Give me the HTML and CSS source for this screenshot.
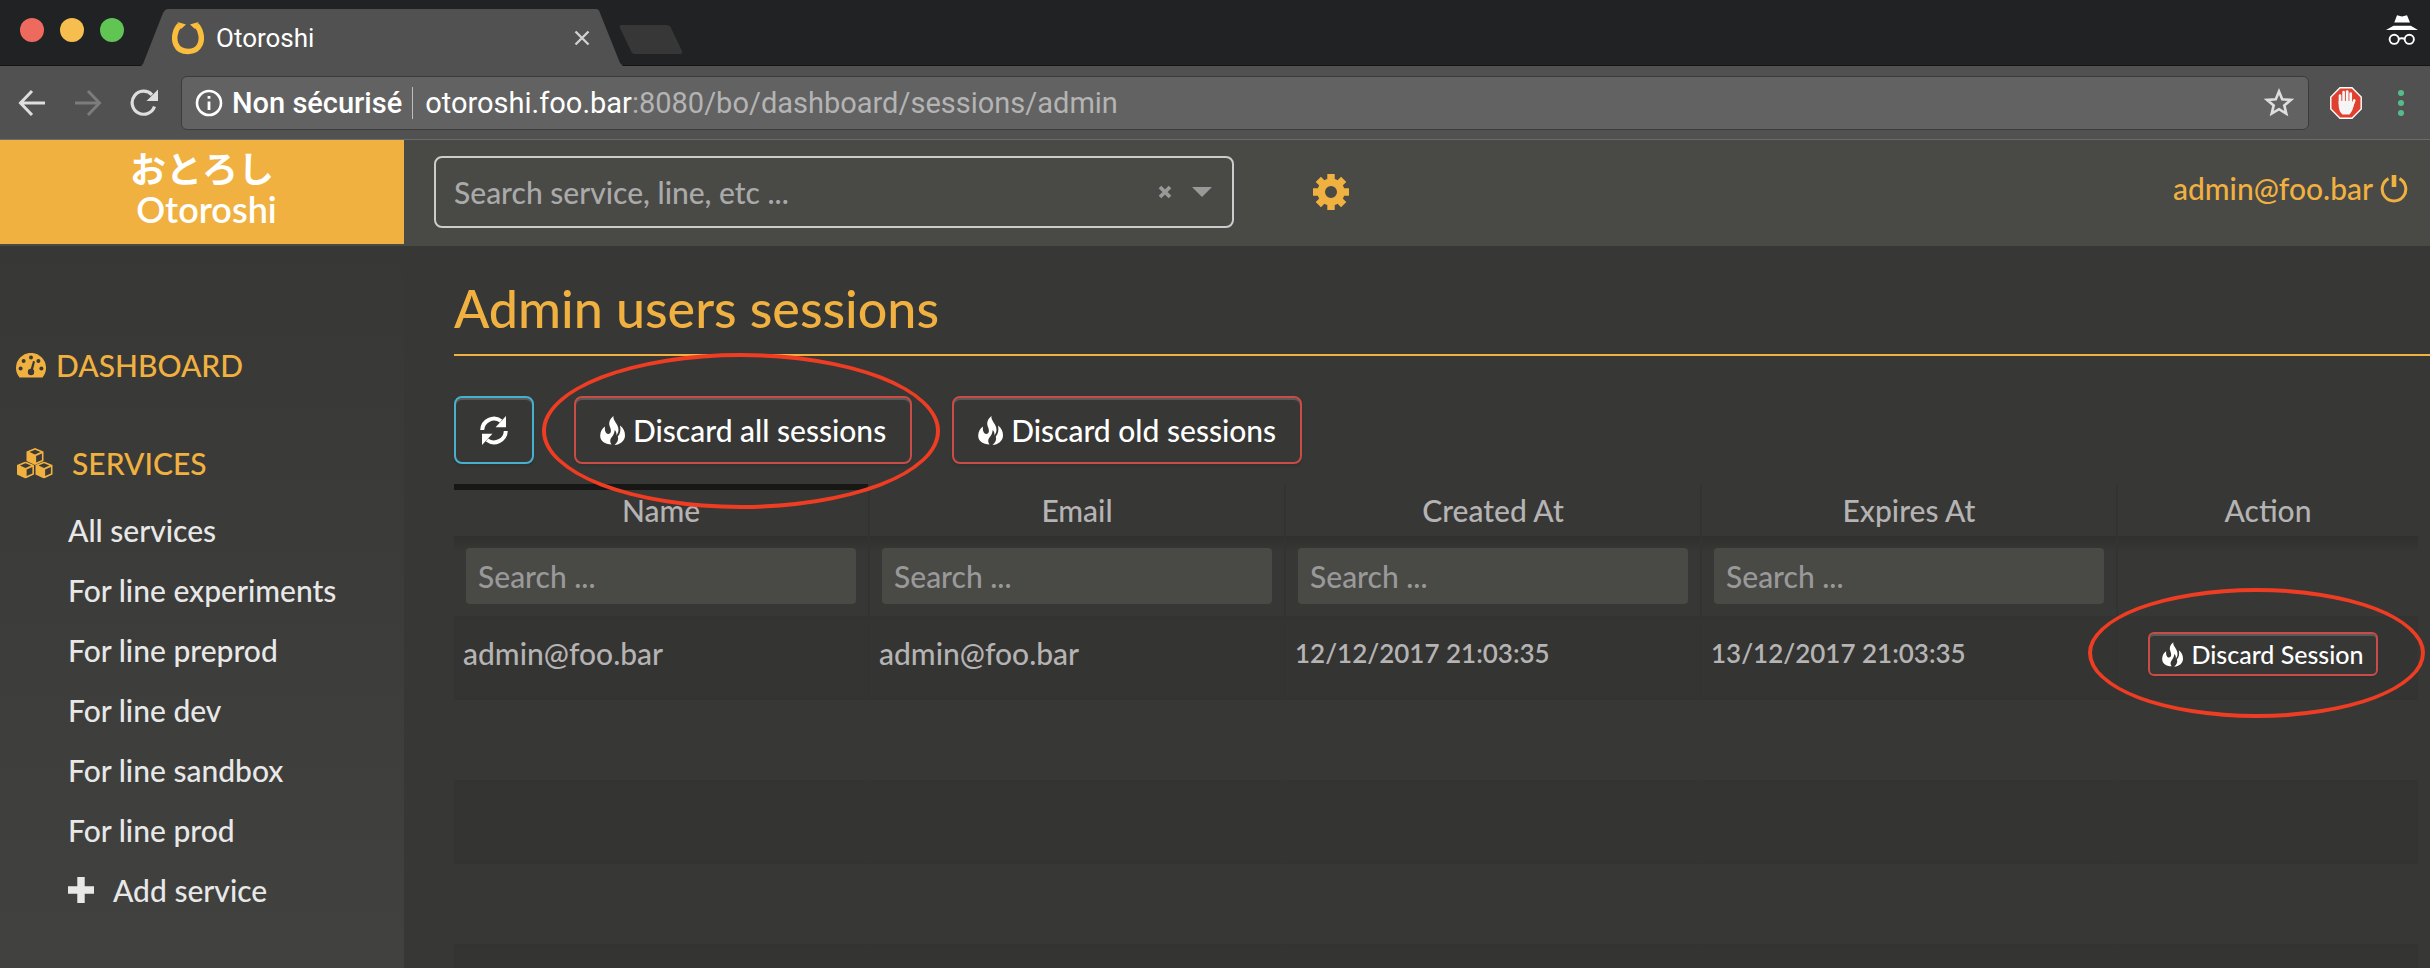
FILE: index.html
```html
<!DOCTYPE html>
<html lang="en">
<head>
<meta charset="utf-8">
<title>Otoroshi</title>
<link rel="stylesheet" href="styles.css">
</head>
<body>
<svg class="defs" aria-hidden="true">
  <symbol id="flame" viewBox="0 0 25 29">
    <path d="M13.500 0C12.500 4.500 18.500 8 18.500 13.500C18.500 16.500 17.300 18 16.500 19.500C16.700 17 16 15 14.700 14C14.500 17 13.500 19 11.500 21.500C9.800 23.500 9.800 26 11.500 28.500C5 28.500 0 25 .2 19.500C.3 15 2.500 12 5 10.500C4.500 14 5.500 18 8.300 18C11.500 18 11.300 14 10 11C8.300 7 9.500 3 13.500 0Z"/>
    <path d="M20 9.500C23.500 12 25 15.500 25 19.500C25 25 20 28.800 14.500 29C17.500 26.500 18.800 23.500 17.800 20.500C20.300 17.500 21 14 20 9.500Z"/>
  </symbol>
  <symbol id="cube" viewBox="-9 -9 18 18">
    <path fill-rule="evenodd" d="M0-9L9-5.200V4.800L0 9L-9 4.800V-5.200ZM0-7.100L-5.800-4.700L0-2.200L5.800-4.700ZM1.200-.6V6.300L7.300 3.600V-3.300Z"/>
  </symbol>
</svg>

<header class="browser">
  <div class="tabstrip">
    <div class="lights"><i class="light red"></i><i class="light yellow"></i><i class="light green"></i></div>
    <div class="tab">
      <svg class="tab-shape" viewBox="0 0 482 57" preserveAspectRatio="none" aria-hidden="true"><path d="M0 57L2 55L22 4Q24 0 27 0H455Q458 0 459 4L479 54L482 57Z" fill="#515151"/></svg>
      <svg class="favicon" viewBox="0 0 32 34" aria-hidden="true"><path d="M7.500 4C2.500 10 1.500 18 4 23.500C6.200 28.500 10.500 30.500 16 30.500C21.500 30.500 25.800 28.500 28 23.500C30.500 18 29.500 10 24.500 4" fill="none" stroke="#fbbd3e" stroke-width="5.500"/><path d="M5.500 1L14 3.500L9 8ZM26.500 1L18 3.500L23 8Z" fill="#fbbd3e"/></svg>
      <span class="tab-title">Otoroshi</span>
      <button class="tab-close" aria-label="Close tab"><svg viewBox="0 0 16 16"><path d="M1.500 1.500L14.500 14.500M14.500 1.500L1.500 14.500" stroke="#d0d0d0" stroke-width="2.400"/></svg></button>
    </div>
    <button class="newtab" aria-label="New tab"><svg viewBox="0 0 64 30"><path d="M3 0H47Q51 0 52 3L63 26Q64 29 61 29H16Q13 29 12 26L1 3Q0 0 3 0Z" fill="#373737"/></svg></button>
    <svg class="incognito" viewBox="0 0 32 30" aria-label="Incognito"><path d="M11 .2L16 1.500L21 .2L24 7.400H8.300ZM7.500 10.800H24.800L32 15H0Z" fill="#fff"/><g fill="none" stroke="#fff" stroke-width="1.900"><circle cx="8.200" cy="24.300" r="4.600"/><circle cx="23.300" cy="24.300" r="4.600"/><path d="M12.500 24Q15.700 22.500 19 24"/></g></svg>
  </div>
  <div class="toolbar">
    <div class="nav">
      <button aria-label="Back"><svg viewBox="0 0 28 28"><path d="M27 14H3M14 2L2.500 14L14 26" fill="none" stroke="#dedede" stroke-width="3"/></svg></button>
      <button aria-label="Forward"><svg viewBox="0 0 28 28"><path d="M1 14H25M14 2L25.500 14L14 26" fill="none" stroke="#7c7c7c" stroke-width="3"/></svg></button>
      <button aria-label="Reload"><svg viewBox="0 0 28 28"><path d="M24.500 17.500A11.500 11.500 0 1 1 22 5.800" fill="none" stroke="#dedede" stroke-width="3.200"/><path d="M28 .5V12H16.500Z" fill="#dedede"/></svg></button>
    </div>
    <div class="address">
      <svg class="info" viewBox="0 0 28 28" aria-hidden="true"><circle cx="14" cy="14" r="12" fill="none" stroke="#fff" stroke-width="2.600"/><path d="M14 7V9.800M14 12.400V21" stroke="#fff" stroke-width="2.800"/></svg>
      <span class="security">Non sécurisé</span>
      <span class="divider"></span>
      <span class="url">otoroshi.foo.bar<span class="path">:8080/bo/dashboard/sessions/admin</span></span>
      <button class="star" aria-label="Bookmark"><svg viewBox="0 0 30 29"><path d="M15 3.500L18.200 11.300L26.800 11.900L20.300 17.400L22.300 25.600L15 21.200L7.700 25.600L9.700 17.400L3.200 11.900L11.800 11.300Z" fill="none" stroke="#dedede" stroke-width="2.600"/></svg></button>
    </div>
    <svg class="blocker" viewBox="0 0 32 32" aria-label="Ad blocker"><path d="M10 .8H22L31.200 10V22L22 31.200H10L.8 22V10Z" fill="#e0402f" stroke="#fff" stroke-width="1.400"/><path d="M10 17V8.500M13.600 15V5M17.200 15V4.500M20.700 16V6.500M24.300 13.500L21.500 20" stroke="#f5f5f5" stroke-width="2.700" stroke-linecap="round"/><path d="M8.700 14H22.100V19L24.500 15Q23 24 19.500 27.500H12.500Q8.700 24 8.700 19Z" fill="#f5f5f5"/></svg>
    <button class="menu" aria-label="Menu"><svg viewBox="0 0 6 28"><g fill="#55bd8b"><circle cx="3" cy="4" r="3"/><circle cx="3" cy="14" r="3"/><circle cx="3" cy="24" r="3"/></g></svg></button>
  </div>
</header>

<header class="topbar">
  <a class="brand" href="#"><span lang="ja">おとろし</span><span>&nbsp;Otoroshi</span></a>
  <div class="search">
    <input type="text" aria-label="Search service" placeholder="Search service, line, etc ...">
    <button aria-label="Clear"><svg class="clear" viewBox="0 0 14 14"><path d="M2 2L12 12M12 2L2 12" stroke="#999" stroke-width="3.800"/></svg></button>
    <button aria-label="Open"><svg class="caret" viewBox="0 0 20 10"><path d="M0 0H20L10 10Z" fill="#999"/></svg></button>
  </div>
  <a class="settings" href="#" aria-label="Settings"><svg viewBox="-18 -18 36 36"><g stroke="#f0b140" fill="none"><circle r="9.800" stroke-width="7.600"/><path d="M0-18V-12M0 12V18M-18 0H-12M12 0H18M-12.700-12.700L-8.500-8.500M12.700 12.700L8.500 8.500M12.700-12.700L8.500-8.500M-12.700 12.700L-8.500 8.500" stroke-width="7.400"/></g></svg></a>
  <a class="user" href="#">admin@foo.bar <svg viewBox="0 0 28 29" aria-label="Log out"><path d="M8.500 4.700A11.800 11.800 0 1 0 19.500 4.700" fill="none" stroke="#f0b140" stroke-width="3"/><path d="M14 1V13" stroke="#f0b140" stroke-width="4.600"/></svg></a>
</header>

<div class="app">
  <nav class="sidebar">
    <a class="section" href="#"><svg class="gauge" viewBox="0 0 30 25" aria-hidden="true"><path d="M3.500 24.500A15 15 0 1 1 26.500 24.500Z" fill="#f0b140"/><g fill="#393937"><circle cx="4.600" cy="15.500" r="2"/><circle cx="7.600" cy="8" r="2"/><circle cx="15" cy="4.600" r="2"/><circle cx="22.400" cy="8" r="2"/><circle cx="25.400" cy="15.500" r="2"/><circle cx="15" cy="19" r="3.200"/><path d="M17 8L19 8.500L16.500 19H13.800Z"/></g></svg>DASHBOARD</a>
    <a class="section services" href="#"><svg class="cubes" viewBox="0 0 38 31" aria-hidden="true"><g fill="#f0b140"><use href="#cube" x="9.500" y="0" width="19" height="17"/><use href="#cube" x="0" y="13.500" width="19" height="17"/><use href="#cube" x="18.500" y="13.500" width="19" height="17"/></g></svg>SERVICES</a>
    <ul>
      <li><a href="#">All services</a></li>
      <li><a href="#">For line experiments</a></li>
      <li><a href="#">For line preprod</a></li>
      <li><a href="#">For line dev</a></li>
      <li><a href="#">For line sandbox</a></li>
      <li><a href="#">For line prod</a></li>
      <li><a href="#"><svg class="plus" viewBox="0 0 26 26" aria-hidden="true"><path d="M13 0V26M0 13H26" stroke="#e8e8e8" stroke-width="7.400"/></svg>Add service</a></li>
    </ul>
  </nav>

  <main>
    <h1>Admin users sessions</h1>
    <div class="actions">
      <button class="btn info-btn" aria-label="Refresh"><svg class="refresh" viewBox="0 0 28 29"><g id="half"><path d="M2.200 14A11.800 11.800 0 0 1 21 5" fill="none" stroke="#fff" stroke-width="4"/><path d="M26 0V11.300H15.500Z" fill="#fff"/></g><use href="#half" transform="rotate(180 14 14.500)"/></svg></button>
      <span class="marked">
        <button class="btn danger"><svg class="flame"><use href="#flame"/></svg>Discard all sessions</button>
        <i class="ring ring-large"></i>
      </span>
      <button class="btn danger"><svg class="flame"><use href="#flame"/></svg>Discard old sessions</button>
    </div>
    <table>
      <colgroup><col><col><col><col><col class="col-action"></colgroup>
      <thead>
        <tr class="heads"><th class="sorted">Name</th><th>Email</th><th>Created At</th><th>Expires At</th><th>Action</th></tr>
        <tr class="filters">
          <td><input type="text" aria-label="Filter name" placeholder="Search ..."></td>
          <td><input type="text" aria-label="Filter email" placeholder="Search ..."></td>
          <td><input type="text" aria-label="Filter created at" placeholder="Search ..."></td>
          <td><input type="text" aria-label="Filter expires at" placeholder="Search ..."></td>
          <td></td>
        </tr>
      </thead>
      <tbody>
        <tr>
          <td>admin@foo.bar</td><td>admin@foo.bar</td><td class="date">12/12/2017 21:03:35</td><td class="date">13/12/2017 21:03:35</td>
          <td class="action"><span class="marked"><button class="btn danger small"><svg class="flame"><use href="#flame"/></svg>Discard Session</button><i class="ring ring-small"></i></span></td>
        </tr>
        <tr><td></td><td></td><td></td><td></td><td></td></tr>
        <tr><td></td><td></td><td></td><td></td><td></td></tr>
        <tr><td></td><td></td><td></td><td></td><td></td></tr>
        <tr><td></td><td></td><td></td><td></td><td></td></tr>
      </tbody>
    </table>
  </main>
</div>
</body>
</html>
```
FILE: styles.css
```css
* { box-sizing: border-box; }

body {
  margin: 0;
  height: 100vh;
  display: flex;
  flex-direction: column;
  overflow: hidden;
  background: #373735;
  color: #b5b3b3;
  font-family: Lato, "Noto Sans CJK JP", sans-serif;
  font-size: 30px;
  font-weight: 500;
}

svg { display: block; flex: none; }
a { color: inherit; text-decoration: none; }
button {
  margin: 0;
  padding: 0;
  border: 0;
  background: none;
  color: inherit;
  font: inherit;
  flex: none;
}
input { font: inherit; color: inherit; }
.defs { position: absolute; width: 0; height: 0; }

/* Browser frame */
.browser { flex: none; font-family: Roboto, sans-serif; font-weight: 400; }
.tabstrip {
  height: 66px;
  display: flex;
  align-items: flex-end;
  background: #202224;
  box-shadow: inset 0 -1px #141516;
}
.lights { display: flex; gap: 16px; width: 141px; padding: 0 0 24px 20px; }
.light { width: 24px; height: 24px; border-radius: 50%; }
.red { background: #ee6a5f; }
.yellow { background: #f5be4f; }
.green { background: #61c554; }
.tab {
  position: relative;
  width: 482px;
  height: 57px;
  padding: 0 33px 0 31px;
  display: flex;
  align-items: center;
  color: #fff;
  font-size: 26px;
}
.tab-shape { position: absolute; inset: 0; width: 100%; height: 100%; }
.favicon { position: relative; width: 32px; height: 34px; }
.tab-title { position: relative; flex: 1; padding-left: 12px; }
.tab-close { position: relative; }
.tab-close svg { width: 16px; height: 16px; }
.newtab { margin-left: -4px; padding-bottom: 11px; }
.newtab svg { width: 64px; height: 30px; }
.incognito { width: 32px; height: 30px; margin: 0 12px 21px auto; }

.toolbar {
  height: 74px;
  display: flex;
  align-items: center;
  padding: 0 26px 0 18px;
  background: #515151;
  border-bottom: 1px solid #6b6b69;
}
.nav { display: flex; gap: 28px; width: 163px; }
.nav svg { width: 28px; height: 28px; }
.address {
  flex: 1;
  height: 54px;
  display: flex;
  align-items: center;
  padding: 0 14px 0 13px;
  border: 1px solid #3b3b3b;
  border-radius: 6px;
  background: #626262;
  color: #fff;
  font-size: 29px;
}
.info { width: 28px; height: 28px; }
.security { padding-left: 9px; font-weight: 500; }
.divider { width: 1px; height: 32px; margin: 0 12px 0 10px; background: #bdbdbd; }
.url { flex: 1; }
.path { color: #b4b4b4; }
.star svg { width: 30px; height: 29px; }
.blocker { width: 32px; height: 32px; margin: 0 36px 0 21px; }
.menu svg { width: 6px; height: 28px; }

/* Application bar */
.topbar {
  flex: none;
  height: 106px;
  display: flex;
  align-items: center;
  padding-bottom: 2px;
  background: #494946;
  color: #f0b140;
}
.brand {
  flex: none;
  width: 404px;
  height: 104px;
  padding-bottom: 6px;
  display: flex;
  flex-direction: column;
  align-items: center;
  justify-content: center;
  background: #f0b140;
  color: #fff;
  font-size: 36px;
  font-weight: 600;
  line-height: 40px;
}
.search {
  flex: 0 1 800px;
  height: 72px;
  margin-left: 30px;
  padding: 0 20px 0 18px;
  display: flex;
  align-items: center;
  gap: 20px;
  border: 2px solid #ccc;
  border-radius: 8px;
}
.search input {
  flex: 1;
  min-width: 0;
  padding: 0;
  border: 0;
  background: none;
}
.search input::placeholder { color: #aaa; opacity: 1; }
.clear { width: 14px; height: 14px; }
.caret { width: 20px; height: 10px; }
.settings { margin-left: 79px; }
.settings svg { width: 36px; height: 36px; }
.user {
  margin-left: auto;
  padding: 0 22px 8px 0;
  display: flex;
  align-items: center;
  gap: 7px;
}
.user svg { width: 28px; height: 29px; }

.app {
  flex: 1;
  min-height: 0;
  display: grid;
  grid-template-columns: 404px 1fr;
}

/* Sidebar */
.sidebar {
  padding: 89px 0 0 16px;
  background: linear-gradient(#373735, #41413f);
  line-height: 60px;
}
.section { display: flex; align-items: center; color: #f0b140; }
.services { margin-top: 38px; }
.gauge { width: 30px; height: 25px; margin-right: 10px; }
.cubes { width: 38px; height: 31px; margin-right: 18px; }
.sidebar ul { margin: 7px 0 0; padding: 0 0 0 52px; list-style: none; color: #e8e8e8; }
.sidebar li a { display: flex; align-items: center; }
.plus { width: 26px; height: 26px; margin-right: 19px; }

/* Sessions page */
main { min-width: 0; overflow: hidden; padding: 34px 0 0 50px; }
h1 {
  margin: 0 0 40px;
  padding-bottom: 18px;
  border-bottom: 2px solid #f0b140;
  color: #f0b140;
  font-size: 52px;
  font-weight: 500;
  line-height: 56px;
}
.actions { display: flex; gap: 40px; }
.btn {
  height: 68px;
  padding: 0 24px;
  display: flex;
  align-items: center;
  gap: 8px;
  border: 2px solid;
  border-radius: 8px;
  background: #373735;
  box-shadow: inset 0 2px #5a5a58, 0 2px 2px #323230;
  color: #fff;
  white-space: nowrap;
}
.info-btn { border-color: #48b0cf; }
.danger { border-color: #c94c46; }
.small { height: 44px; padding: 0 12px; border-radius: 6px; font-size: 25px; }
.refresh { width: 28px; height: 29px; }
.flame { width: 25px; height: 29px; fill: #fff; }
.small .flame { width: 21px; height: 25px; }
.marked { position: relative; display: inline-block; }
.ring {
  position: absolute;
  border: 4px solid #ee3d22;
  border-radius: 50%;
  pointer-events: none;
}
.ring-large { inset: -43px -28px -45px -32px; }
.ring-small { inset: -44px -47px -42px -60px; z-index: 1; }

table {
  width: calc(100% - 12px);
  margin-top: 20px;
  table-layout: fixed;
  border-collapse: separate;
  border-spacing: 0;
}
.col-action { width: 300px; }
th, td { padding: 0; border-right: 2px solid #333331; text-align: left; }
th:last-child, td:last-child { border-right: 0; }
.heads th {
  height: 52px;
  text-align: center;
  font-weight: 500;
  line-height: 50px;
}
.heads .sorted { box-shadow: inset 0 6px #171715; }
.filters td {
  height: 82px;
  padding: 0 12px;
  border-bottom: 2px solid #333331;
  background: linear-gradient(#30302e, #373735 16px);
}
.filters input {
  display: block;
  width: 100%;
  height: 56px;
  padding: 0 12px;
  border: 0;
  border-radius: 4px;
  background: #494946;
}
.filters input::placeholder { color: #999; opacity: 1; }
tbody td {
  height: 82px;
  padding: 0 9px 10px;
  border-bottom: 2px solid #333331;
}
tbody tr:nth-child(odd) td { background: #343432; }
tbody tr:nth-child(n+2) td { border-right-color: transparent; }
tbody .date { font-size: 26px; font-weight: 600; }
tbody .action { padding: 0 10px 8px 0; text-align: center; }
```
